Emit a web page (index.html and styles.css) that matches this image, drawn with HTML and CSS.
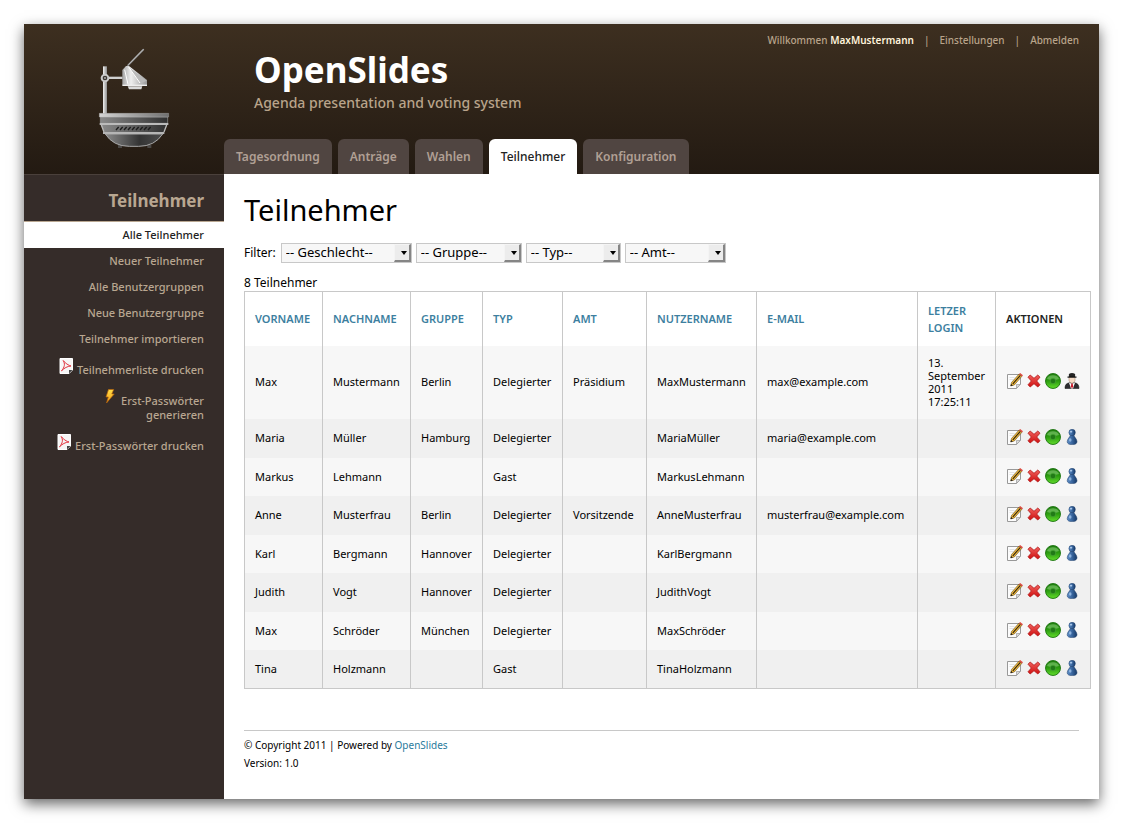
FILE: index.html
```html
<!DOCTYPE html>
<html lang="de">
<head>
<meta charset="utf-8">
<title>OpenSlides – Teilnehmer</title>
<link rel="stylesheet" href="styles.css">
</head>
<body>
<svg class="defs" aria-hidden="true">
  <defs>
    <linearGradient id="g-green" x1="0" y1="0" x2="0" y2="1"><stop offset="0" stop-color="#1f7d10"/><stop offset=".5" stop-color="#2c9d10"/><stop offset="1" stop-color="#62dc2c"/></linearGradient>
    <linearGradient id="g-blue" x1="0" y1="0" x2="1" y2="0"><stop offset="0" stop-color="#5f8fc7"/><stop offset=".5" stop-color="#39669f"/><stop offset="1" stop-color="#173966"/></linearGradient>
    <linearGradient id="g-red" x1="0" y1="0" x2="0" y2="1"><stop offset="0" stop-color="#f0605c"/><stop offset="1" stop-color="#cf1010"/></linearGradient>
    <linearGradient id="g-bolt" x1="0" y1="0" x2="0" y2="1"><stop offset="0" stop-color="#ffe04a"/><stop offset="1" stop-color="#f39a12"/></linearGradient>
  </defs>
  <symbol id="i-edit" viewBox="0 0 16 16">
    <path d="M.5 1.500h13v9.500l-4 4.500H.5z" fill="#fcfcfc" stroke="#999"/>
    <path d="M2.500 4.500h5M2.500 6.500h4" stroke="#e4e4e4"/>
    <path d="M9.500 15.300v-3.800h3.800z" fill="#ddd" stroke="#999" stroke-width=".7"/>
    <path d="M3.600 13l.9-3.500L12 1l2.900 2.300L7.300 12z" fill="#f0b93a" stroke="#4a3510" stroke-width=".5"/>
    <path d="M5.800 10.900l7.600-8.600" stroke="#2b2010" stroke-width="1.100"/>
    <path d="M12 1.200L13.100 0 16 2.200l-1.100 1.300z" fill="#dc4c42"/>
    <path d="M3.600 13l.5-1.900 1.700 1.300z" fill="#111"/>
  </symbol>
  <symbol id="i-delete" viewBox="0 0 16 16">
    <path d="M2 4.200L4.200 2 8 5.300 11.800 2 14 4.200 10.700 8 14 11.800 11.800 14 8 10.700 4.200 14 2 11.800 5.300 8z" fill="url(#g-red)" stroke="#b01616" stroke-width=".8" stroke-linejoin="round"/>
  </symbol>
  <symbol id="i-active" viewBox="0 0 16 16">
    <circle cx="8" cy="8" r="7.500" fill="url(#g-green)" stroke="#1c7410" stroke-width=".9"/>
    <path d="M2 6a6.200 5 0 0 1 12 0q-6 2-12 0z" fill="#a7dd98" opacity=".45"/>
    <circle cx="8" cy="8" r="2.800" fill="#217a17" stroke="#4fae3c" stroke-width=".6"/>
  </symbol>
  <symbol id="i-user" viewBox="0 0 16 16">
    <path d="M6.200 6.300h3.800c.2 2 3 3.500 3 6.400 0 1.900-1.800 2.900-4.900 2.900s-4.900-1-4.900-2.900c0-2.900 2.800-4.400 3-6.400z" fill="url(#g-blue)" stroke="#1d3d69" stroke-width=".5"/>
    <circle cx="8.100" cy="3.500" r="3.200" fill="url(#g-blue)" stroke="#1d3d69" stroke-width=".5"/>
    <ellipse cx="7.100" cy="2.700" rx="1.200" ry=".9" fill="#a9c6e8"/>
    <ellipse cx="6.200" cy="11" rx="1.300" ry="1.800" fill="#8fb4de"/>
  </symbol>
  <symbol id="i-admin" viewBox="0 0 16 16">
    <path d="M5 4h6v3.500q-.5 2.500-3 2.700-2.500-.2-3-2.700z" fill="#f6dcc6" stroke="#8e6a50" stroke-width=".4"/>
    <path d="M4.900 1Q8-.8 11.100 1V4H4.900z" fill="#252525"/>
    <path d="M3.500 3.500h9v1.200h-9z" fill="#111"/>
    <path d="M1 15.500c0-4 1.600-5.200 4.500-5.800l2.500 1.100 2.500-1.100c2.900.6 4.500 1.800 4.500 5.800z" fill="#2d2d30" stroke="#111" stroke-width=".5"/>
    <path d="M5 9.800L7 15.500h2l2-5.700-3 1z" fill="#fff"/>
    <path d="M7.300 10.500h1.400l.5 3L8 15.400l-1.200-1.900z" fill="#cf1f2e"/>
  </symbol>
  <symbol id="i-pdf" viewBox="0 0 16 16">
    <path d="M2 .5h12.500v11.500L11 15.500H2z" fill="#f6f6f6" stroke="#fff"/>
    <path d="M11 15.500V12h3.500z" fill="#444"/>
    <path d="M5 2.500c2 1.500 3.200 4 8 5.500-4 .3-6.500 2-9.500 4.800C6.500 9.500 7.500 5.500 5 2.500z" fill="none" stroke="#e2343f" stroke-linejoin="round"/>
  </symbol>
  <symbol id="i-bolt" viewBox="0 0 16 16">
    <path d="M6.500.5h5.200L9.800 5h2.400L4.500 14l1.800-6H4z" fill="url(#g-bolt)" stroke="#b8640c" stroke-width=".7"/>
  </symbol>
</svg>

<div class="page">
  <header class="header">
    <div class="logo">
      <svg width="76" height="104" viewBox="48 36 228 312" role="img" aria-label="Overheadprojektor">
        <defs>
          <linearGradient id="p-pole" x1="0" x2="1"><stop offset="0" stop-color="#f2f2f2"/><stop offset="1" stop-color="#8d8d8d"/></linearGradient>
          <linearGradient id="p-head" x1="0" x2="1"><stop offset="0" stop-color="#a5a5a5"/><stop offset=".35" stop-color="#eeeeee"/><stop offset="1" stop-color="#999"/></linearGradient>
          <linearGradient id="p-top" x1="0" x2="1"><stop offset="0" stop-color="#d4d4d4"/><stop offset="1" stop-color="#707070"/></linearGradient>
          <linearGradient id="p-body" x1="0" x2="1"><stop offset="0" stop-color="#8a8a8a"/><stop offset="1" stop-color="#303030"/></linearGradient>
          <linearGradient id="p-bowl" x1="0" x2="1"><stop offset="0" stop-color="#8a8a8a"/><stop offset=".6" stop-color="#343434"/><stop offset="1" stop-color="#4d4d4d"/></linearGradient>
        </defs>
        <path d="M144 91L190 44" stroke="#8c8c8c" stroke-width="5" stroke-linecap="round"/>
        <path d="M145 89L190 43" stroke="#d2d2d2" stroke-width="2"/>
        <path d="M69 94h12v142H69z" fill="url(#p-pole)"/>
        <path d="M86 125h42v7H86z" fill="#d0d0d0"/>
        <circle cx="75" cy="129" r="10" fill="#3c3732" stroke="#c9c9c9" stroke-width="6"/>
        <circle cx="75" cy="129" r="3" fill="#aaa"/>
        <path d="M127 105l11-12h9l54 42v15h-74z" fill="url(#p-head)"/>
        <path d="M146 96l34 50 20-9z" fill="#b9b9b9"/>
        <path d="M134 104l10 44M146 96l34 48" stroke="#fff" stroke-width="3"/>
        <path d="M127 149h74v4h-74z" fill="#eee"/>
        <path d="M143 154h44l-3 9h-37z" fill="#dadada"/>
        <path d="M114 330h12v9h-12zM202 330h12v9h-12z" fill="#4b4845"/>
        <path d="M61 246h202v19H61z" fill="url(#p-body)" stroke="#999" stroke-width="2"/>
        <path d="M58 235h208v11H58z" fill="url(#p-top)" stroke="#bcbcbc" stroke-width="1"/>
        <path d="M64 270h196l-10 23H74z" fill="url(#p-body)"/>
        <path d="M59 264h206v6H59z" fill="#bbb"/>
        <path d="M76 297h172q-24 37-72 37h-28q-48 0-72-37z" fill="url(#p-bowl)" stroke="#a8a8a8" stroke-width="3"/>
        <path d="M69 291h184v6H69z" fill="#b5b5b5"/>
        <path d="M64 270l8 21M260 270l-8 21" stroke="#bbb" stroke-width="4"/>
        <path d="M108 284l8-9m4 9l8-9m4 9l8-9m4 9l8-9m4 9l8-9m4 9l8-9m4 9l8-9m4 9l8-9m4 9l8-9" transform="translate(0 1)" fill="none" stroke="#1c1c1c" stroke-width="4"/>
      </svg>
    </div>
    <div class="banner">
      <nav class="account" aria-label="Konto">
        <span>Willkommen <strong>MaxMustermann</strong></span><span>|</span><a href="#">Einstellungen</a><span>|</span><a href="#">Abmelden</a>
      </nav>
      <div class="brand">
        <p class="brand-name">OpenSlides</p>
        <p class="slogan">Agenda presentation and voting system</p>
      </div>
      <nav class="tabs" aria-label="Hauptmenü">
        <a href="#">Tagesordnung</a>
        <a href="#">Anträge</a>
        <a href="#">Wahlen</a>
        <a href="#" class="active">Teilnehmer</a>
        <a href="#">Konfiguration</a>
      </nav>
    </div>
  </header>

  <div class="body">
    <aside class="sidebar">
      <h2>Teilnehmer</h2>
      <ul>
        <li><a href="#" class="active">Alle Teilnehmer</a></li>
        <li><a href="#">Neuer Teilnehmer</a></li>
        <li><a href="#">Alle Benutzergruppen</a></li>
        <li><a href="#">Neue Benutzergruppe</a></li>
        <li><a href="#">Teilnehmer importieren</a></li>
        <li><a href="#"><svg class="icon"><use href="#i-pdf"/></svg> Teilnehmerliste drucken</a></li>
        <li><a href="#"><svg class="icon"><use href="#i-bolt"/></svg> Erst-Passwörter<br>generieren</a></li>
        <li><a href="#"><svg class="icon"><use href="#i-pdf"/></svg> Erst-Passwörter drucken</a></li>
      </ul>
    </aside>

    <main class="content">
      <h1>Teilnehmer</h1>
      <form class="filters">
        <label for="gender">Filter:</label>
        <span class="select gender"><select id="gender"><option>-- Geschlecht--</option></select></span>
        <span class="select group"><select aria-label="Gruppe"><option>-- Gruppe--</option></select></span>
        <span class="select type"><select aria-label="Typ"><option>-- Typ--</option></select></span>
        <span class="select office"><select aria-label="Amt"><option>-- Amt--</option></select></span>
      </form>
      <p class="count">8 Teilnehmer</p>
      <div class="table-area">
      <table>
        <colgroup><col class="c-first"><col class="c-last"><col class="c-group"><col class="c-type"><col class="c-office"><col class="c-user"><col class="c-mail"><col class="c-login"><col class="c-actions"></colgroup>
        <thead>
          <tr>
            <th><a href="#">Vorname</a></th><th><a href="#">Nachname</a></th><th><a href="#">Gruppe</a></th><th><a href="#">Typ</a></th><th><a href="#">Amt</a></th><th><a href="#">Nutzername</a></th><th><a href="#">E-Mail</a></th><th><a href="#">Letzer Login</a></th><th>Aktionen</th>
          </tr>
        </thead>
        <tbody>
          <tr class="tall"><td>Max</td><td>Mustermann</td><td>Berlin</td><td>Delegierter</td><td>Präsidium</td><td>MaxMustermann</td><td>max@example.com</td><td>13. September 2011 17:25:11</td><td><div class="actions"><a href="#" aria-label="Bearbeiten"><svg class="icon"><use href="#i-edit"/></svg></a><a href="#" aria-label="Löschen"><svg class="icon"><use href="#i-delete"/></svg></a><a href="#" aria-label="Aktiv"><svg class="icon"><use href="#i-active"/></svg></a><a href="#" aria-label="Administrator"><svg class="icon"><use href="#i-admin"/></svg></a></div></td></tr>
          <tr><td>Maria</td><td>Müller</td><td>Hamburg</td><td>Delegierter</td><td></td><td>MariaMüller</td><td>maria@example.com</td><td></td><td><div class="actions"><a href="#" aria-label="Bearbeiten"><svg class="icon"><use href="#i-edit"/></svg></a><a href="#" aria-label="Löschen"><svg class="icon"><use href="#i-delete"/></svg></a><a href="#" aria-label="Aktiv"><svg class="icon"><use href="#i-active"/></svg></a><a href="#" aria-label="Benutzer"><svg class="icon"><use href="#i-user"/></svg></a></div></td></tr>
          <tr><td>Markus</td><td>Lehmann</td><td></td><td>Gast</td><td></td><td>MarkusLehmann</td><td></td><td></td><td><div class="actions"><a href="#" aria-label="Bearbeiten"><svg class="icon"><use href="#i-edit"/></svg></a><a href="#" aria-label="Löschen"><svg class="icon"><use href="#i-delete"/></svg></a><a href="#" aria-label="Aktiv"><svg class="icon"><use href="#i-active"/></svg></a><a href="#" aria-label="Benutzer"><svg class="icon"><use href="#i-user"/></svg></a></div></td></tr>
          <tr><td>Anne</td><td>Musterfrau</td><td>Berlin</td><td>Delegierter</td><td>Vorsitzende</td><td>AnneMusterfrau</td><td>musterfrau@example.com</td><td></td><td><div class="actions"><a href="#" aria-label="Bearbeiten"><svg class="icon"><use href="#i-edit"/></svg></a><a href="#" aria-label="Löschen"><svg class="icon"><use href="#i-delete"/></svg></a><a href="#" aria-label="Aktiv"><svg class="icon"><use href="#i-active"/></svg></a><a href="#" aria-label="Benutzer"><svg class="icon"><use href="#i-user"/></svg></a></div></td></tr>
          <tr><td>Karl</td><td>Bergmann</td><td>Hannover</td><td>Delegierter</td><td></td><td>KarlBergmann</td><td></td><td></td><td><div class="actions"><a href="#" aria-label="Bearbeiten"><svg class="icon"><use href="#i-edit"/></svg></a><a href="#" aria-label="Löschen"><svg class="icon"><use href="#i-delete"/></svg></a><a href="#" aria-label="Aktiv"><svg class="icon"><use href="#i-active"/></svg></a><a href="#" aria-label="Benutzer"><svg class="icon"><use href="#i-user"/></svg></a></div></td></tr>
          <tr><td>Judith</td><td>Vogt</td><td>Hannover</td><td>Delegierter</td><td></td><td>JudithVogt</td><td></td><td></td><td><div class="actions"><a href="#" aria-label="Bearbeiten"><svg class="icon"><use href="#i-edit"/></svg></a><a href="#" aria-label="Löschen"><svg class="icon"><use href="#i-delete"/></svg></a><a href="#" aria-label="Aktiv"><svg class="icon"><use href="#i-active"/></svg></a><a href="#" aria-label="Benutzer"><svg class="icon"><use href="#i-user"/></svg></a></div></td></tr>
          <tr><td>Max</td><td>Schröder</td><td>München</td><td>Delegierter</td><td></td><td>MaxSchröder</td><td></td><td></td><td><div class="actions"><a href="#" aria-label="Bearbeiten"><svg class="icon"><use href="#i-edit"/></svg></a><a href="#" aria-label="Löschen"><svg class="icon"><use href="#i-delete"/></svg></a><a href="#" aria-label="Aktiv"><svg class="icon"><use href="#i-active"/></svg></a><a href="#" aria-label="Benutzer"><svg class="icon"><use href="#i-user"/></svg></a></div></td></tr>
          <tr><td>Tina</td><td>Holzmann</td><td></td><td>Gast</td><td></td><td>TinaHolzmann</td><td></td><td></td><td><div class="actions"><a href="#" aria-label="Bearbeiten"><svg class="icon"><use href="#i-edit"/></svg></a><a href="#" aria-label="Löschen"><svg class="icon"><use href="#i-delete"/></svg></a><a href="#" aria-label="Aktiv"><svg class="icon"><use href="#i-active"/></svg></a><a href="#" aria-label="Benutzer"><svg class="icon"><use href="#i-user"/></svg></a></div></td></tr>
        </tbody>
      </table>
      </div>
      <footer class="footer">
        <p>© Copyright 2011 | Powered by <a href="#">OpenSlides</a></p>
        <p>Version: 1.0</p>
      </footer>
    </main>
  </div>
</div>
</body>
</html>
```
FILE: styles.css
```css
* { box-sizing: border-box; }

body {
  margin: 0;
  padding: 24px;
  background: #fff;
  color: #000;
  font-family: "Lucida Grande", "Noto Sans", "Open Sans", sans-serif;
  font-size: 11px;
  line-height: 18px;
}

h1, h2, p, ul { margin: 0; padding: 0; }
a { color: inherit; text-decoration: none; }
.defs { position: absolute; width: 0; height: 0; }
.icon { width: 16px; height: 16px; }

.page {
  display: flex;
  flex-direction: column;
  min-height: calc(100vh - 48px);
  background: #fff;
  box-shadow: 0 5px 13px rgba(0, 0, 0, .6);
}

/* Header */
.header {
  display: grid;
  grid-template-columns: 200px 1fr;
  height: 150px;
  background: linear-gradient(#3d2f20, #231a12);
}
.logo { padding: 23px 0 0 72px; }
.banner {
  display: flex;
  flex-direction: column;
}
.account {
  display: flex;
  justify-content: flex-end;
  gap: 10px;
  padding: 8px 20px 0 0;
  color: #b9a48b;
  font-size: 10px;
  font-weight: 500;
  line-height: 16px;
}
.account strong { color: #fff3dc; font-weight: 600; }
.brand { padding-left: 30px; }
.brand-name {
  color: #fff;
  font-size: 35px;
  font-weight: 700;
  line-height: 44px;
}
.slogan {
  color: #b9a48b;
  font-size: 14px;
  font-weight: 500;
  line-height: 22px;
}
.tabs { display: flex; gap: 6px; margin-top: auto; }
.tabs a {
  padding: 0 12px;
  border-radius: 6px 6px 0 0;
  background: #504541;
  color: #b0a095;
  font-size: 12px;
  font-weight: 600;
  line-height: 35px;
}
.tabs .active { background: #fff; color: #222; font-weight: 500; }

/* Columns */
.body {
  display: grid;
  grid-template-columns: 200px 1fr;
  flex: 1;
}
.sidebar {
  border-top: 1px solid #4a403b;
  background: #352c29;
  color: #b9a791;
  text-align: right;
  font-weight: 500;
}
.sidebar h2 {
  padding: 14px 20px 9px;
  border-bottom: 1px solid #b9a791;
  font-size: 17px;
  line-height: 23px;
}
.sidebar ul { list-style: none; }
.sidebar a {
  display: block;
  padding: 6px 20px;
  line-height: 14px;
}
.sidebar .active { background: #fff; color: #222; }

.content { min-width: 0; padding: 16px 20px 26px; }
h1 {
  font-size: 29px;
  font-weight: 400;
  line-height: 40px;
}
.filters {
  display: flex;
  align-items: center;
  gap: 4px;
  padding: 13px 0 11px;
  font-size: 12px;
  line-height: 20px;
}
.filters label { padding-right: 1px; }
.select { position: relative; height: 20px; }
.select select {
  width: 100%;
  height: 20px;
  padding: 0 4px 2px;
  border: 1px solid #c8c8c8;
  border-radius: 0;
  background: #f7f7f7;
  color: #000;
  font: inherit;
  font-size: 13px;
  line-height: 16px;
  appearance: none;
}
.select::before {
  content: "";
  position: absolute;
  top: 1px;
  right: 1px;
  bottom: 1px;
  width: 14px;
  border: 1px solid;
  border-color: #f4f4f4 #858585 #858585 #f4f4f4;
  border-right-width: 2px;
  border-bottom-width: 2px;
  background: #ececec;
  pointer-events: none;
}
.select::after {
  content: "";
  position: absolute;
  top: 8px;
  right: 5px;
  border: 3px solid transparent;
  border-top: 4px solid #000;
  border-bottom: 0;
  pointer-events: none;
}
.gender { width: 131px; }
.group { width: 106px; }
.type { width: 95px; }
.office { width: 101px; }
.count { font-size: 12px; line-height: 17px; }

/* Participants */
.table-area { margin-right: -12px; }
table {
  width: 100%;
  border: 1px solid #c8c8c8;
  border-collapse: collapse;
  table-layout: fixed;
  line-height: 13px;
}
.c-first { width: 78px; }
.c-last { width: 88px; }
.c-group { width: 72px; }
.c-type { width: 80px; }
.c-office { width: 84px; }
.c-user { width: 110px; }
.c-login { width: 78px; }
.c-actions { width: 95px; }
th, td {
  padding: 0 10px;
  border-left: 1px solid #c8c8c8;
  text-align: left;
}
th {
  height: 54px;
  color: #222;
  font-weight: 600;
  line-height: 17px;
  text-transform: uppercase;
}
th a { color: #3d7f9f; }
td { padding-bottom: 1px; }
tbody tr { height: 38px; background: #f7f7f7; }
tbody tr:nth-child(even) { height: 39px; background: #f0f0f0; }
tbody .tall { height: 73px; }
.actions { display: flex; gap: 3px; padding: 0 0 1px 1px; }
.actions a, .actions .icon { display: block; }

.footer {
  margin: 41px 0 0;
  padding-top: 5px;
  border-top: 1px solid #c8c8c8;
  font-size: 10px;
}
.footer a { color: #2a7a9c; }
```
